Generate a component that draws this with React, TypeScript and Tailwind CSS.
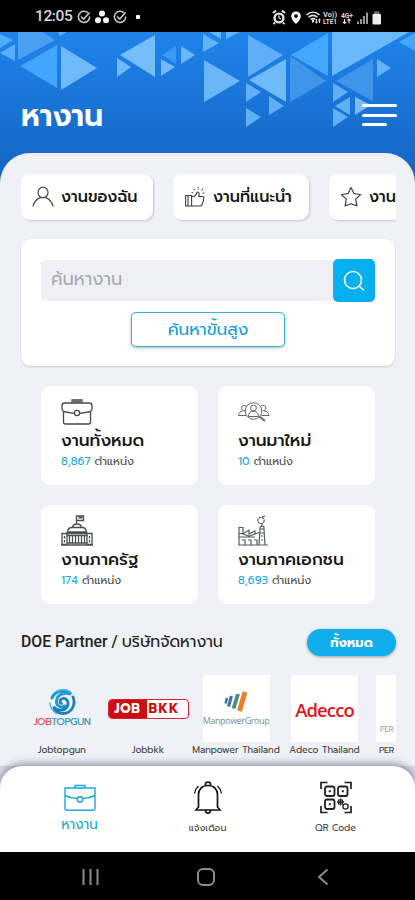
import React from "react";

const TH = "font-['Prompt','Kanit','Noto_Sans_Thai','Noto_Sans_Thai_UI','Roboto','Noto_Sans',sans-serif]";

type Tri = [string, string];
const triangles: Tri[] = [
  ["0,34 13,40 0,48", "#4fabfb"],
  ["0,53 15,44 15,61", "#55aefb"],
  ["18,32 18,60 55,40 43,32", "#4a9ff0"],
  ["58,32 67,32 60,36", "#55aefb"],
  ["20,66 57,45 57,88", "#42a6fd"],
  ["61,46 61,90 97,68", "#6fbaf9"],
  ["117,58 117,77 131,67", "#6fbaf9"],
  ["120,55 155,35 155,77", "#74bff9"],
  ["161,59 161,76 175,67", "#6fbaf9"],
  ["162,55 176,46 176,64", "#3b98f6"],
  ["181,46 181,64 195,55", "#68b8fa"],
  ["203,34 219,43 203,52", "#62b4fa"],
  ["204,60 204,102 240,81", "#6ab6f8"],
  ["209,32 221,32 221,39", "#62b4fa"],
  ["226,32 240,32 226,39", "#62b4fa"],
  ["248,35 248,77 283,55", "#5eaff7"],
  ["249,80 286,59 286,102", "#6fbaf8"],
  ["290,56 290,102 326,81", "#3f95ea"],
  ["291,55 328,33 328,76", "#42a8fc"],
  ["332,32 332,76 409,32", "#69b8f8"],
  ["336,81 373,59 373,101", "#3f95ea"],
  ["377,59 377,77 391,68", "#62b4fa"],
  ["399,42 415,33 415,51", "#42a8fc"],
  ["246,83 246,102 261,92", "#5fb0f4"],
  ["269,96 269,115 284,106", "#5fb0f4"],
  ["246,108 246,127 261,117", "#5fb0f4"],
  ["333,83 333,102 348,92", "#5fb0f4"],
  ["335,106 350,97 350,115", "#5fb0f4"],
  ["355,97 355,115 371,105", "#7abcf4"],
  ["333,108 333,127 348,117", "#5fb0f4"],
];

function CheckDot() {
  return (
    <svg width="14" height="14" viewBox="0 0 14 14" fill="none" stroke="#c8c8c8" strokeWidth="1.5">
      <path d="M11 2.900A5.600 5.600 0 1 0 12.600 6.500" />
      <path d="M4 6.500l2.600 2.600 6-6.600" />
    </svg>
  );
}

function StatusBar() {
  return (
    <div className="flex h-8 items-center bg-black pt-px pr-[32px] pl-[35px] text-[#d6d6d6]">
      <span className="w-[37px] whitespace-nowrap font-['Roboto',sans-serif] text-[15.5px] leading-none font-medium tracking-[-0.4px]">12:05</span>
      <div className="ml-[5px] flex items-center gap-[4px]">
        <CheckDot />
        <svg width="14" height="14" viewBox="0 0 14 14" fill="#fff">
          <circle cx="7" cy="3.4" r="3" /><circle cx="3" cy="10.2" r="3" /><circle cx="11" cy="10.2" r="3" />
        </svg>
        <CheckDot />
        <span className="ml-[5px] size-[4px] rounded-[1px] bg-white" />
      </div>
      <svg className="ml-auto" width="112" height="16" viewBox="0 0 112 16" fill="none" stroke="#e4e4e4">
        <circle cx="8" cy="9" r="4.400" strokeWidth="2.400" />
        <path d="M2 4l3-2.400M14 4l-3-2.400M4 13.500l-1.400 1.600M12 13.500l1.400 1.600" strokeWidth="2" />
        <path d="M8 6.400V9l2 1" strokeWidth="1.200" />
        <path d="M25 2.400a4.800 4.800 0 0 0-4.800 4.800c0 3.400 4.800 7.800 4.800 7.800s4.800-4.400 4.800-7.800A4.800 4.800 0 0 0 25 2.400zM25 5.200a1.900 1.900 0 1 1 0 3.800 1.900 1.900 0 0 1 0-3.800z" fill="#fff" fillRule="evenodd" stroke="none" />
        <path d="M35.500 6c4-3.800 9-3.800 13 0M37.500 8.300c3-2.600 6-2.600 9 0M39.500 10.500c2-1.500 3.500-1.500 5 0" strokeWidth="1.500" />
        <path d="M42 10.500v3" strokeWidth="2" />
        <path d="M45.500 10v4m-1.400-1.300L45.500 14l1.400-1.300M48.500 14v-4m-1.400 1.300L48.500 10l1.400 1.300" strokeWidth="1" />
        <g fill="#dcdcdc" stroke="none" fontFamily="Roboto, sans-serif" fontWeight="700" fontSize="7">
          <text x="52" y="8" textLength="14" lengthAdjust="spacingAndGlyphs">Vo))</text>
          <text x="52" y="15" textLength="14" lengthAdjust="spacingAndGlyphs">LTE1</text>
          <text x="70" y="8.500" fontSize="6.500" textLength="12" lengthAdjust="spacingAndGlyphs">4G+</text>
        </g>
        <path d="M73.500 10v4.500m-1.500-1.500l1.500 1.500 1.500-1.500M78 14.500V10m-1.500 1.500L78 10l1.500 1.500" strokeWidth="1.100" />
        <path d="M87 15v-2.500M90 15v-5M93 15V7M96 15V3.500" strokeWidth="1.700" stroke="#b4b4b4" />
        <rect x="101.500" y="5" width="8.500" height="10.500" rx="1" fill="#eee" stroke="none" />
        <rect x="103" y="2.500" width="5.500" height="2.500" fill="#777" stroke="none" />
      </svg>
    </div>
  );
}

function PersonIcon() {
  return (
    <svg width="22" height="22" viewBox="0 0 22 22" fill="none" stroke="#4b4b4b" strokeWidth="1.200" strokeLinecap="round">
      <ellipse cx="11" cy="6.500" rx="5" ry="5.300" />
      <path d="M1 20c1.200-4.200 3.600-7 7.300-8.400M21 20c-1.200-4.200-3.600-7-7.300-8.400" />
    </svg>
  );
}

function ThumbIcon() {
  return (
    <svg width="20" height="22" viewBox="0 0 20 22" fill="none" stroke="#3f3f3f" strokeWidth="1.100" strokeLinejoin="round">
      <path d="M.6 9.500h6V20h-6zM3 10v10" />
      <path d="M6.600 10.500H9c1.800-1 2.800-2.400 3.300-4.500 2 .2 2.400 2 1.400 4.500h4.300c1.200.6 1.300 1.900.3 2.600.7.800.5 1.800-.3 2.300.3 1-.1 1.700-.8 2.100 0 1.400-.6 2.500-2 2.500H6.600" />
      <path d="M13 .8l.4 2.800M8.600 2.600l1.400 2M18 2.600l-1.500 2M19.500 7l-2.400.4M6.600 6.500l1.800.4" strokeDasharray="1.400 .6" />
    </svg>
  );
}

function StarIcon() {
  return (
    <svg width="22" height="22" viewBox="0 0 22 22" fill="none" stroke="#444" strokeWidth="1.200" strokeLinejoin="round">
      <path d="M11 1.500l2.900 6.100 6.700.9-4.900 4.600 1.200 6.800L11 17.700l-5.900 2.200 1.200-6.800-4.900-4.600 6.700-.9z" />
    </svg>
  );
}

function Chip({ icon, label, cls }: { icon: React.ReactNode; label: string; cls: string }) {
  return (
    <div className={`flex h-[46px] shrink-0 items-center rounded-[9px] bg-white shadow-[1px_1px_2px_rgba(0,0,0,0.18)] ${cls}`}>
      {icon}
      <span className="whitespace-nowrap text-[16px] font-medium text-[#151515]">{label}</span>
    </div>
  );
}

function BriefcaseIcon() {
  return (
    <svg width="32" height="26" viewBox="0 0 32 26" fill="none" stroke="#4a4a4a" strokeWidth="1.300">
      <path d="M11 4V1h10v3" /><path d="M12 2.800h8" />
      <path d="M13.300 14.300l-8.800-1.300C2.200 12.700 1 11.500 1 9.500V6.800C1 5.200 2.200 4 4 4h24c1.800 0 3 1.200 3 2.800v2.700c0 2-1.200 3.200-3.500 3.500l-8.800 1.300" />
      <circle cx="16" cy="14" r="2.600" />
      <path d="M2.500 12.500V23c0 1.300.8 2 2 2h23c1.200 0 2-.7 2-2V12.500" />
    </svg>
  );
}

function PeopleIcon() {
  return (
    <svg width="32" height="20" viewBox="0 0 32 20" fill="none" stroke="#666" strokeWidth="1">
      <circle cx="15.500" cy="9" r="8.300" />
      <circle cx="15.500" cy="6" r="2.900" />
      <path d="M10.500 14.500c0-3.500 1.800-5.200 5-5.200s5 1.700 5 5.200z" />
      <path d="M7 8.500a2.600 2.600 0 1 1-.2-5c1 0 1.600.4 2 1M5.500 8.800C2.500 9.200.8 10.500.5 13.500h7.500M24.500 8.500a2.600 2.600 0 1 0 .2-5c-1 0-1.600.4-2 1M26 8.800c3 .4 4.700 1.700 5 4.700h-7.500" />
      <path d="M21.500 14.500l5.500 4.500" strokeWidth="1.800" />
    </svg>
  );
}

function CapitolIcon() {
  return (
    <svg width="32" height="31" viewBox="0 0 32 31" fill="none" stroke="#4a4f4f" strokeWidth="1.300">
      <path d="M15.500 9V1h7v4.500h-7" /><path d="M17.500 2.500h4" strokeWidth="2" />
      <path d="M11.500 12.500c.3-2.200 1.700-3.500 4.500-3.500s4.200 1.300 4.500 3.500M6.500 17c.5-2.900 2-4.500 4-4.500h11c2 0 3.500 1.600 4 4.500zM5 18.500h22" />
      <path d="M1 18.500h5v11H1zM26 18.500h5v11h-5zM0 30h32M6 28h20M6 20.500h20" />
      <path d="M8.500 20.500V28M11.500 20.500V28M14.500 20.500V28M17.500 20.500V28M20.500 20.500V28M23.500 20.500V28" strokeWidth="1.200" />
      <path d="M3.500 21v2.500M3.500 25v2.500M28.500 21v2.500M28.500 25v2.500" />
    </svg>
  );
}

function FactoryIcon() {
  return (
    <svg width="30" height="31" viewBox="0 0 30 31" fill="none" stroke="#555d5d" strokeWidth="1.200">
      <path d="M0 30h30M1 30V12.500h4V19l6-4v4l6-3v3l4-1.500M21 30l1.200-18.500h3.600L27 30M21.500 14h5M21.500 18h5.200" />
      <circle cx="23" cy="5.500" r="3.200" strokeDasharray="2.500 .6" /><path d="M24 2l3-1M24 8.500v2.500" />
      <path d="M1 18.500h5M1 22h16M4 25h3v5M10 25h3v5M16 25h3v5M5 19l6 2 6-2M23 21h2M23 25h2" />
    </svg>
  );
}

function JobCard({ icon, title, count, pad }: { icon: React.ReactNode; title: string; count: string; pad: string }) {
  return (
    <div className="flex h-[99px] w-[157px] flex-col rounded-[9px] bg-white pl-[20px]">
      <div className={`flex h-[42px] shrink-0 items-start ${pad}`}>{icon}</div>
      <div className="h-[24px] whitespace-nowrap text-[17px] leading-[24px] font-medium text-[#161616]">{title}</div>
      <div className="h-[20px] whitespace-nowrap text-[11.200px] leading-[20px] text-[#4d4d4d]">
        <span className="text-[#1ba9e2]">{count}</span> ตำแหน่ง
      </div>
    </div>
  );
}

function Partner({ name, cls, children }: { name: string; cls: string; children: React.ReactNode }) {
  return (
    <div className={`flex shrink-0 flex-col items-center ${cls}`}>
      <div className="flex h-[67px] items-center justify-center">{children}</div>
      <span className="mt-[1px] whitespace-nowrap text-[9.300px] leading-[14px] text-[#444]">{name}</span>
    </div>
  );
}

function JobTopGunLogo() {
  return (
    <div className="flex h-[67px] flex-col items-center pt-[14px]">
      <svg width="28" height="27" viewBox="0 0 28 27" fill="none" strokeLinecap="round">
        <path d="M4 9C7 1.500 17 0 23 5c-8-2-14 1-14.500 7-.3 5 4.500 7.500 8.500 5" stroke="#2199d4" strokeWidth="3" />
        <path d="M25 8c3 7-1 16.500-10 16.500-5 0-8.500-2.500-9.500-6.500 4 4.500 11.500 4 14-1 2-5-2-9-6-7-2 1.200-2 4 0 4.500" stroke="#1b7fbe" strokeWidth="2.800" />
        <path d="M1.800 14c.5 4 2.500 8 6.500 10.500M9 2c4-2 9-1.500 12 0" stroke="#58b7e4" strokeWidth="1.500" />
      </svg>
      <div className="mt-[-1px] whitespace-nowrap font-['Prompt','Lato',sans-serif] text-[10.300px] leading-[14px] tracking-[-0.400px] text-[#2a8fc6]">
        <span className="text-[#e2463c]">JOB</span>TOPGUN
      </div>
    </div>
  );
}

function JobBkkLogo() {
  return (
    <div className="mt-px flex h-[20px] w-[81px] overflow-hidden rounded-[4px] border border-[#d8232a] bg-white font-['Prompt',sans-serif] text-[13px] leading-[18px] font-bold">
      <span className="w-[38px] bg-[#cf0c15] pl-[6px] tracking-[0.600px] text-white">JOB</span>
      <span className="pl-[2px] tracking-[1.300px] text-[#cf0c15]">BKK</span>
    </div>
  );
}

function ManpowerLogo() {
  return (
    <div className="flex h-[67px] w-[67px] flex-col items-center bg-white pt-[16px]">
      <svg width="24" height="21" viewBox="0 0 24 21" fill="none">
        <path d="M3 7L1.500 12.500" stroke="#3b6fae" strokeWidth="2.500" />
        <path d="M7.500 5L4.500 15.500" stroke="#3b6fae" strokeWidth="3" />
        <path d="M14 3L9.500 17.500" stroke="#4e8c7b" strokeWidth="3.800" />
        <path d="M21 1L15.500 20" stroke="#e98129" strokeWidth="5" />
      </svg>
      <span className="mt-[2px] font-['Open_Sans',sans-serif] text-[9px] leading-[14px] tracking-[-0.400px] text-[#7b8d99]">ManpowerGroup</span>
    </div>
  );
}

function NavItem({ icon, label, cls }: { icon: React.ReactNode; label: string; cls: string }) {
  return (
    <div className="flex w-[128px] flex-col items-center">
      <div className="flex h-[33px] items-end">{icon}</div>
      <span className={`whitespace-nowrap ${cls}`}>{label}</span>
    </div>
  );
}

export default function App() {
  return (
    <div className={`flex h-[900px] w-[415px] flex-col overflow-hidden bg-black ${TH}`}>
      <StatusBar />
      <div className="relative flex h-[820px] flex-col bg-linear-to-b from-[#2083ea] to-[#1464c2] to-[150px]">
        <svg className="absolute top-0 left-0" width="415" height="121" viewBox="0 32 415 121">
          {triangles.map(([points, fill]) => (
            <polygon key={points} points={points} fill={fill} />
          ))}
        </svg>
        <header className="relative flex h-[121px] shrink-0 items-start justify-between pr-[18px] pl-[21px]">
          <h1 className="mt-[66px] text-[30px] leading-[36px] font-semibold text-white">หางาน</h1>
          <div className="mt-[72px] flex w-[35px] flex-col gap-[6.500px]">
            <span className="h-[3px] rounded-full bg-white" />
            <span className="h-[3px] rounded-full bg-white" />
            <span className="h-[3px] w-[25px] rounded-full bg-white" />
          </div>
        </header>

        <main className="relative flex h-[613px] shrink-0 flex-col rounded-t-[30px] bg-[#eff1f6] px-[20px] pt-[21px]">
          <div className="-mb-[4px] flex h-[50px] w-[376px] gap-[20px] overflow-hidden pl-px">
            <Chip icon={<PersonIcon />} label="งานของฉัน" cls="w-[132px] pl-[11px] gap-[7px]" />
            <Chip icon={<ThumbIcon />} label="งานที่แนะนำ" cls="w-[136px] pl-[12px] gap-[8px]" />
            <Chip icon={<StarIcon />} label="งาน" cls="w-[140px] pl-[11px] gap-[7px]" />
          </div>

          <section className="mt-[19px] ml-px flex h-[127px] w-[374px] flex-col items-center rounded-[9px] bg-white pt-[20px] shadow-[0_1px_2px_rgba(0,0,0,0.18)]">
            <div className="flex h-[43px] w-[334px]">
              <div className="my-px flex flex-1 items-center rounded-l-[4px] bg-[#eff0f5] pb-[2px] pl-[10px] text-[18px] text-[#aaaab3]">ค้นหางาน</div>
              <div className="flex w-[42px] items-center justify-center rounded-[5px] bg-[#05aff0]">
                <svg width="22" height="22" viewBox="0 0 22 22" fill="none" stroke="#e9fbff" strokeWidth="1.600" strokeLinecap="round">
                  <circle cx="10" cy="10" r="8.500" /><path d="M16.500 16.500l4 3.500" />
                </svg>
              </div>
            </div>
            <div className="mt-[10px] flex h-[35px] w-[154px] items-center justify-center rounded-[5px] border border-[#35b2dc] bg-white text-[17px] text-[#129fda] shadow-[0_1px_3px_rgba(0,0,0,0.3)]">ค้นหาขั้นสูง</div>
          </section>

          <section className="mt-[20px] ml-[21px] grid w-[334px] grid-cols-2 gap-[20px]">
            <JobCard icon={<BriefcaseIcon />} title="งานทั้งหมด" count="8,867" pad="pt-[13px]" />
            <JobCard icon={<PeopleIcon />} title="งานมาใหม่" count="10" pad="pt-[16px]" />
            <JobCard icon={<CapitolIcon />} title="งานภาครัฐ" count="174" pad="pt-[10px]" />
            <JobCard icon={<FactoryIcon />} title="งานภาคเอกชน" count="8,693" pad="pt-[10px]" />
          </section>

          <div className="mt-[25px] flex h-[27px] w-[376px] items-center justify-between pl-px">
            <h2 className="whitespace-nowrap text-[15.800px] text-[#222]"><span className="font-['Roboto',sans-serif] font-medium">DOE Partner / </span>บริษัทจัดหางาน</h2>
            <span className="flex h-[27px] w-[89px] items-center justify-center rounded-full bg-[#10aeed] text-[13px] font-bold text-white shadow-[0_1px_3px_rgba(0,0,0,0.35)]">ทั้งหมด</span>
          </div>

          <div className="mt-[19px] flex w-[376px] overflow-hidden">
            <Partner name="Jobtopgun" cls="w-[84px]"><JobTopGunLogo /></Partner>
            <Partner name="Jobbkk" cls="w-[88px]"><JobBkkLogo /></Partner>
            <Partner name="Manpower Thailand" cls="w-[88px]"><ManpowerLogo /></Partner>
            <Partner name="Adeco Thailand" cls="w-[89px]">
              <div className="flex h-[67px] w-[67px] items-center justify-center bg-white pt-[3px] font-['Open_Sans',sans-serif] text-[18.500px] font-semibold tracking-[-0.900px] text-[#dd1620]">Adecco</div>
            </Partner>
            <div className="flex w-[27px] shrink-0 flex-col pl-[7px]">
              <div className="flex h-[67px] w-[20px] items-end bg-white pb-[7px] pl-[4px] text-[7.500px] text-[#a0a0a0]">PER</div>
              <span className="mt-[1px] pl-[3px] text-[8.800px] leading-[14px] tracking-[-0.300px] text-[#444]">PER</span>
            </div>
          </div>
        </main>

        <div className="relative flex h-[86px] shrink-0 bg-[#d5d8e4]">
          <nav className="flex h-[86px] w-full justify-center rounded-t-[22px] bg-white pt-[15px] shadow-[0_-3px_7px_rgba(70,80,110,0.500)]">
            <NavItem
              icon={
                <svg className="mb-[2px]" width="32" height="28" viewBox="0 0 32 28" fill="none" stroke="#19a8e0" strokeWidth="1.400">
                  <path d="M11 4V1.500h10V4M1 4h30v20.500c0 1-.7 1.700-1.700 1.700H2.700c-1 0-1.700-.7-1.700-1.700zM1 11.500c4 2 8 2.800 12 3M31 11.500c-4 2-8 2.800-12 3" />
                  <circle cx="16" cy="15.500" r="2.700" />
                </svg>
              }
              label="หางาน"
              cls="mt-[1px] text-[13.500px] leading-[20px] text-[#19a8e0]"
            />
            <NavItem
              icon={
                <svg width="30" height="33" viewBox="0 0 30 33" fill="none" stroke="#161616" strokeWidth="1.700">
                  <path d="M15 4.500c-6 0-9.500 4-9.500 9V26L3 29h24l-2.500-3V13.500c0-5-3.500-9-9.500-9zM12.500 4.500V3c0-1 1-1.800 2.500-1.800s2.500.8 2.500 1.800v1.500M12.300 29c.2 2 1.200 3.200 2.700 3.200s2.500-1.200 2.700-3.200" />
                  <path d="M5.500 5C3.400 6.800 2 9.500 1.500 12.500M24.500 5c2.100 1.800 3.500 4.500 4 7.500" strokeWidth="1.400" />
                </svg>
              }
              label="แจ้งเตือน"
              cls="mt-[6px] text-[9.500px] leading-[16px] text-[#444]"
            />
            <NavItem
              icon={
                <svg width="32" height="33" viewBox="0 0 32 33" fill="none" stroke="#202020" strokeWidth="1.800">
                  <path d="M1 8V1.500h6.500M24.500 1.500H31V8M31 25v6.500h-6.500M7.500 31.500H1V25" strokeWidth="1.700" />
                  <rect x="5" y="5.500" width="9.500" height="9.500" rx="2" /><rect x="18" y="5.500" width="9.500" height="9.500" rx="2" /><rect x="5" y="18.500" width="9.500" height="9.500" rx="2" />
                  <path d="M8.800 10.300h2M21.800 10.300h2M8.800 23.300h2" strokeWidth="2" />
                  <path d="M20.500 17.500v7M17 21h7" strokeWidth="1.300" /><rect x="18.500" y="19" width="4" height="4" strokeWidth="1" /><circle cx="25.500" cy="25.500" r="2.600" strokeWidth="1.300" />
                </svg>
              }
              label="QR Code"
              cls="mt-[6px] text-[9.300px] leading-[16px] text-[#444]"
            />
          </nav>
        </div>
      </div>

      <div className="flex h-[48px] shrink-0 items-center bg-black pt-[2px] pl-[82px]">
        <svg width="17" height="18" viewBox="0 0 17 18" stroke="#8b8b8b" strokeWidth="2"><path d="M1.500 1v16M8.500 1v16M15.500 1v16" /></svg>
        <svg className="ml-[98px]" width="18" height="18" viewBox="0 0 18 18" fill="none" stroke="#8b8b8b" strokeWidth="2"><rect x="1" y="1" width="16" height="16" rx="5" /></svg>
        <svg className="ml-[102px]" width="12" height="18" viewBox="0 0 12 18" fill="none" stroke="#8b8b8b" strokeWidth="2"><path d="M10.500 1.500L2 9l8.500 7.500" /></svg>
      </div>
    </div>
  );
}
